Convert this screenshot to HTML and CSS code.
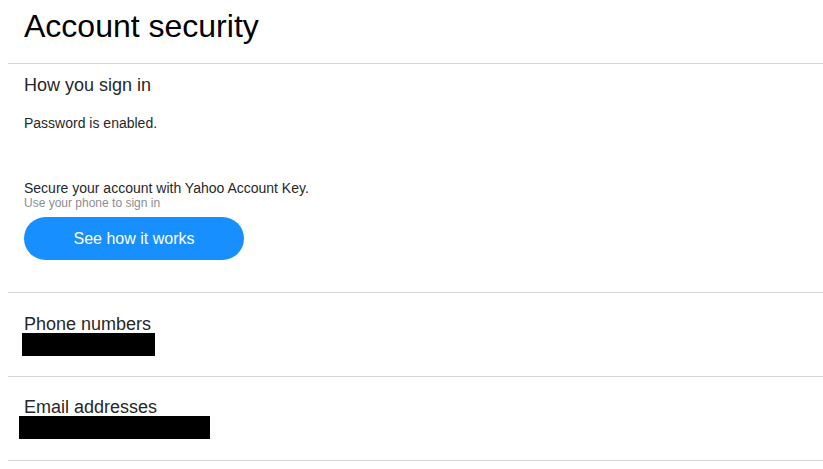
FILE: index.html
```html
<!DOCTYPE html>
<html lang="en">
<head>
<meta charset="utf-8">
<title>Account security</title>
<link rel="stylesheet" href="styles.css">
</head>
<body>
<main class="page">
  <header class="page-header">
    <h1 class="page-title">Account security</h1>
  </header>
  <section class="section section-signin">
    <h2 class="section-title">How you sign in</h2>
    <p class="status">Password is enabled.</p>
    <p class="promo">Secure your account with Yahoo Account Key.</p>
    <p class="promo-sub">Use your phone to sign in</p>
    <button class="btn-primary" type="button">See how it works</button>
  </section>
  <section class="section section-phone">
    <h2 class="section-title tight">Phone numbers</h2>
    <div class="redacted redacted-phone"></div>
  </section>
  <section class="section section-email">
    <h2 class="section-title tight">Email addresses</h2>
    <div class="redacted redacted-email"></div>
  </section>
</main>
</body>
</html>
```
FILE: styles.css
```css
html, body {
  margin: 0;
  padding: 0;
  background: #ffffff;
}

body {
  font-family: "Liberation Sans", Arial, sans-serif;
  color: #26282a;
}

.page {
  margin-left: 8px;
}

.page-header {
  padding: 8px 16px 19px;
  border-bottom: 1px solid #d8d8d8;
}

.page-title {
  margin: 0;
  font-size: 32px;
  line-height: 36px;
  font-weight: normal;
  color: #000000;
}

.section {
  padding: 20px 16px 20px;
  border-bottom: 1px solid #d8d8d8;
}

.section-signin {
  padding-top: 10px;
  padding-bottom: 32px;
}

.section-phone {
  padding-top: 21px;
}

.section-email {
  padding-bottom: 21px;
}

.section-title {
  margin: 0;
  font-size: 18px;
  line-height: 22px;
  font-weight: normal;
  color: #26282a;
}

.section-title.tight {
  line-height: 21px;
}

.status {
  margin: 18px 0 0;
  font-size: 14px;
  line-height: 18px;
}

.promo {
  margin: 48px 0 0;
  font-size: 14px;
  line-height: 17px;
}

.promo-sub {
  margin: 0;
  font-size: 12px;
  line-height: 13px;
  color: #8a8e93;
}

.btn-primary {
  display: block;
  margin-top: 7px;
  width: 220px;
  height: 43px;
  padding: 0;
  border: none;
  border-radius: 22px;
  background: #188fff;
  color: #ffffff;
  font-family: inherit;
  font-size: 16px;
  line-height: 43px;
  text-align: center;
}

.redacted {
  background: #000000;
  height: 23px;
  margin-top: -2px;
}

.redacted-phone {
  width: 133px;
  margin-left: -2px;
}

.redacted-email {
  width: 191px;
  margin-left: -5px;
}
```
